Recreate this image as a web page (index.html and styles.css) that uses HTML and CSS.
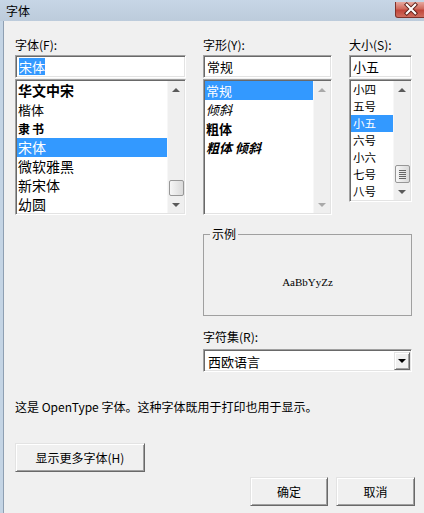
FILE: index.html
```html
<html>
  <head>
    <title>字体</title>
    <link rel="stylesheet" href="styles.css">
  </head>
  <body>
    <div class="dialog">
      <div class="titlebar">
        <span class="caption">字体</span>
        <span class="close">
          <svg width="32" height="16" viewBox="0 0 32 16">
            <path d="M11.5 3.5 L20.5 12.5 M20.5 3.5 L11.5 12.5" stroke="#5b2019" stroke-width="4.2" stroke-linecap="square"/>
            <path d="M11.5 3.5 L20.5 12.5 M20.5 3.5 L11.5 12.5" stroke="#fff" stroke-width="2.2" stroke-linecap="square"/>
          </svg>
        </span>
      </div>

      <div class="client">
        <div class="pickers">
          <div class="col col-font">
            <div class="label">字体(F):</div>
            <div class="field"><span class="val sel">宋体</span></div>
            <div class="listbox tall">
              <ul class="items big">
                <li class="f-hwzs">华文中宋</li>
                <li class="f-kai">楷体</li>
                <li class="f-li">隶书</li>
                <li class="on">宋体</li>
                <li>微软雅黑</li>
                <li>新宋体</li>
                <li>幼圆</li>
              </ul>
              <div class="vscroll">
                <span class="arrow up"></span>
                <span class="track"><span class="thumb"></span></span>
                <span class="arrow down"></span>
              </div>
            </div>
          </div>

          <div class="col col-style">
            <div class="label">字形(Y):</div>
            <div class="field"><span class="val">常规</span></div>
            <div class="listbox tall">
              <ul class="items">
                <li class="on">常规</li>
                <li class="i">倾斜</li>
                <li class="b">粗体</li>
                <li class="b i">粗体 倾斜</li>
              </ul>
              <div class="vscroll off">
                <span class="arrow up"></span>
                <span class="track"></span>
                <span class="arrow down"></span>
              </div>
            </div>
          </div>

          <div class="col col-size">
            <div class="label">大小(S):</div>
            <div class="field"><span class="val">小五</span></div>
            <div class="listbox short">
              <ul class="items tight">
                <li>小四</li>
                <li>五号</li>
                <li class="on">小五</li>
                <li>六号</li>
                <li>小六</li>
                <li>七号</li>
                <li>八号</li>
              </ul>
              <div class="vscroll">
                <span class="arrow up"></span>
                <span class="track"><span class="thumb grip"></span></span>
                <span class="arrow down"></span>
              </div>
            </div>
          </div>
        </div>

        <div class="lower">
          <fieldset class="sample">
            <legend>示例</legend>
            <div class="sample-text">AaBbYyZz</div>
          </fieldset>
          <div class="label charset-label">字符集(R):</div>
          <div class="combo">
            <span class="value">西欧语言</span>
            <span class="drop"></span>
          </div>
        </div>

        <p class="info">这是 OpenType 字体。这种字体既用于打印也用于显示。</p>

        <button type="button" class="btn more">显示更多字体(H)</button>

        <div class="actions">
          <button type="button" class="btn ok">确定</button>
          <button type="button" class="btn cancel">取消</button>
        </div>
      </div>
    </div>
  </body>
</html>
```

FILE: styles.css
```css
body {
  margin: 0;
  background: #f0f0f0;
  font-family: "Noto Sans CJK SC", "Noto Sans", sans-serif;
  font-size: 12px;
  color: #000;
  overflow: hidden;
}

.dialog { width: 424px; height: 513px; }

/* title bar */
.titlebar {
  height: 21px;
  display: flex;
  justify-content: space-between;
  background: linear-gradient(#c7d6e6, #bccbdb);
}
.caption { padding-left: 6px; line-height: 21px; }
.close {
  width: 32px;
  height: 16px;
  margin-top: 2px;
  margin-right: -3px;
  box-sizing: border-box;
  border: 1px solid #7e3129;
  border-top: none;
  border-radius: 0 0 3px 3px;
  background: linear-gradient(#e7a99f, #d06a5d 45%, #c1463a 55%, #cf6d5e);
  display: flex;
  justify-content: center;
}
.close svg { margin-top: -1px; }

/* client area */
.client {
  height: 492px;
  box-sizing: border-box;
  border-left: 3px solid #c4d4e4;
  box-shadow: inset 1px 0 #8e9fb2;
  padding: 16px 9px 0 12px;
}

.label { line-height: 16px; height: 16px; }

.pickers { display: flex; gap: 17px; }
.col-font { width: 171px; }
.col-style { width: 129px; }
.col-size { width: 63px; }

.field {
  margin-top: 2px;
  height: 23px;
  box-sizing: border-box;
  border: 1px solid;
  border-color: #a0a0a0 #fff #fff #a0a0a0;
  box-shadow: inset 1px 1px #696969, inset -1px -1px #e3e3e3;
  background: #fff;
  display: flex;
  align-items: center;
  padding-left: 3px;
  font-size: 13px;
}
.val { line-height: 17px; height: 17px; }
.sel { background: #3399ff; color: #fff; }

.listbox {
  margin-top: 1px;
  box-sizing: border-box;
  border: 1px solid;
  border-color: #a0a0a0 #fff #fff #a0a0a0;
  box-shadow: inset 1px 1px #696969, inset -1px -1px #e3e3e3;
  background: #fff;
  padding: 1px;
  display: flex;
}
.listbox.tall { height: 136px; }
.listbox.short { height: 123px; }

.items {
  flex: 1;
  margin: 0;
  padding: 0;
  list-style: none;
  overflow: hidden;
  font-size: 13px;
}
.items li { line-height: 19px; height: 19px; padding-left: 1px; white-space: nowrap; }
.items.big { font-size: 14px; }
.items.tight { font-size: 11.5px; }
.items.tight li { line-height: 17px; height: 17px; padding-left: 2px; }
.items li.on { background: #3399ff; color: #fff; }
.items li.b { font-weight: bold; }
.items li.i { font-style: italic; }

.f-hwzs { font-weight: bold; }
.f-kai { font-size: 13px; }
.f-li { font-size: 12px; font-weight: bold; letter-spacing: 2px; }

/* scrollbars */
.vscroll {
  width: 17px;
  display: flex;
  flex-direction: column;
  background: #efefef;
  border-left: 1px solid #f7f7f7;
  box-sizing: border-box;
}
.arrow {
  height: 17px;
  flex: none;
  display: flex;
  align-items: center;
  justify-content: center;
}
.arrow::before {
  content: "";
  border-left: 4px solid transparent;
  border-right: 4px solid transparent;
}
.up::before { border-bottom: 4px solid #5a5a5a; }
.down::before { border-top: 4px solid #5a5a5a; }
.off .up::before { border-bottom-color: #a9a9a9; }
.off .down::before { border-top-color: #a9a9a9; }

.track {
  flex: 1;
  display: flex;
  flex-direction: column;
  justify-content: flex-end;
  align-items: center;
}
.thumb {
  width: 15px;
  height: 16px;
  box-sizing: border-box;
  border: 1px solid #979797;
  border-radius: 2px;
  background: linear-gradient(to right, #f6f6f6, #dadada);
}
.thumb.grip {
  height: 18px;
  display: flex;
  align-items: center;
  justify-content: center;
}
.thumb.grip::after {
  content: "";
  width: 7px;
  height: 1px;
  background: #666;
  box-shadow: 0 -4px #666, 0 -2px #666, 0 2px #666, 0 4px #666;
}

/* sample and charset */
.lower { margin-left: 188px; width: 209px; }

.sample {
  margin: 12px 0 0;
  padding: 0;
  border: 1px solid #a0a0a0;
}
.sample legend {
  margin-left: 6px;
  padding: 0 2px;
  line-height: 14px;
}
.sample-text {
  height: 74px;
  box-sizing: border-box;
  padding-top: 8px;
  display: flex;
  align-items: center;
  justify-content: center;
  font-family: "Liberation Serif", serif;
  font-size: 11px;
}

.charset-label { margin-top: 13px; }

.combo {
  margin-top: 4px;
  height: 23px;
  box-sizing: border-box;
  border: 1px solid;
  border-color: #a0a0a0 #fff #fff #a0a0a0;
  box-shadow: inset 1px 1px #696969, inset -1px -1px #e3e3e3;
  background: #fff;
  padding: 2px 1px 1px 2px;
  display: flex;
}
.combo .value { flex: 1; padding-left: 2px; line-height: 19px; font-size: 13px; }
.combo .drop {
  width: 16px;
  box-sizing: border-box;
  border: 1px solid;
  border-color: #e3e3e3 #696969 #696969 #e3e3e3;
  box-shadow: inset 1px 1px #fff, inset -1px -1px #a0a0a0;
  background: #f0f0f0;
  display: flex;
  align-items: center;
  justify-content: center;
}
.combo .drop::before {
  content: "";
  border-left: 4px solid transparent;
  border-right: 4px solid transparent;
  border-top: 4px solid #000;
}

.info { margin: 27px 0 0; line-height: 16px; }

/* buttons */
.btn {
  font-family: inherit;
  font-size: 12px;
  color: #000;
  background: #f0f0f0;
  height: 29px;
  box-sizing: border-box;
  border: 1px solid;
  border-color: #e3e3e3 #696969 #696969 #e3e3e3;
  box-shadow: inset 1px 1px #fff, inset -1px -1px #a0a0a0;
  padding: 0;
  display: block;
}
.more { width: 130px; margin-top: 28px; }

.actions { display: flex; justify-content: flex-end; gap: 8px; margin-top: 5px; }
.ok { width: 78px; }
.cancel { width: 79px; }
```
